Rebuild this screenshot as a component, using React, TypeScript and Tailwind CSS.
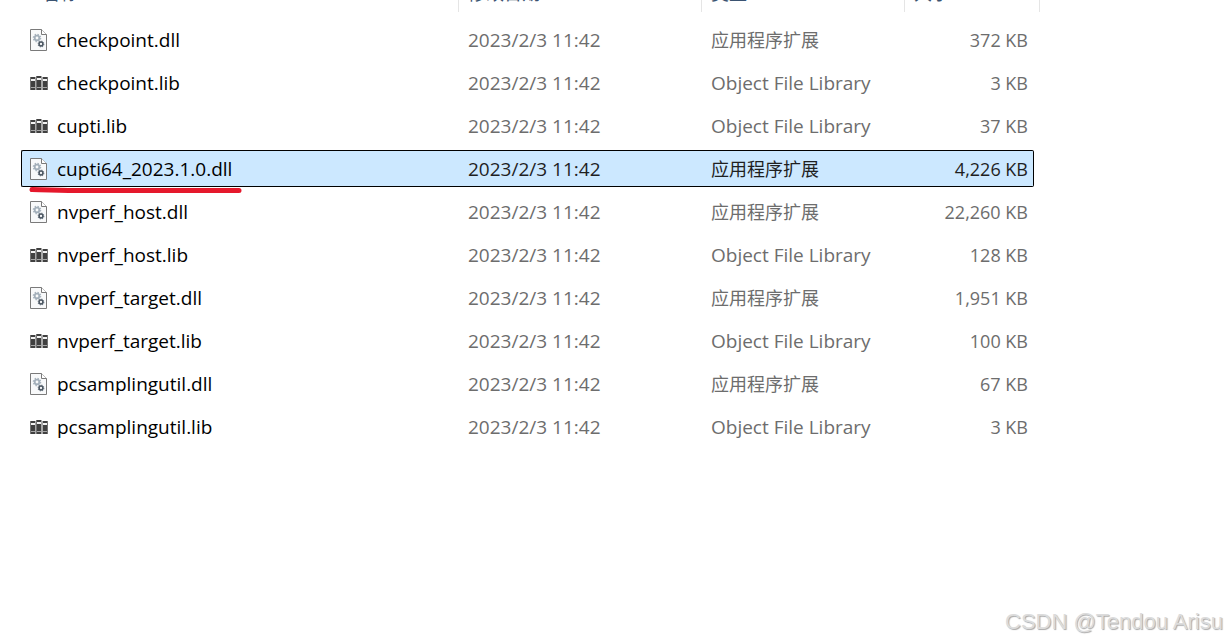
import { clsx } from "clsx";

type FileKind = "dll" | "lib";

interface FileEntry {
  name: string;
  kind: FileKind;
  size: string;
}

const MODIFIED = "2023/2/3 11:42";

const KIND_LABELS: Record<FileKind, string> = {
  dll: "应用程序扩展",
  lib: "Object File Library",
};

const files: FileEntry[] = [
  { name: "checkpoint.dll", kind: "dll", size: "372 KB" },
  { name: "checkpoint.lib", kind: "lib", size: "3 KB" },
  { name: "cupti.lib", kind: "lib", size: "37 KB" },
  { name: "cupti64_2023.1.0.dll", kind: "dll", size: "4,226 KB" },
  { name: "nvperf_host.dll", kind: "dll", size: "22,260 KB" },
  { name: "nvperf_host.lib", kind: "lib", size: "128 KB" },
  { name: "nvperf_target.dll", kind: "dll", size: "1,951 KB" },
  { name: "nvperf_target.lib", kind: "lib", size: "100 KB" },
  { name: "pcsamplingutil.dll", kind: "dll", size: "67 KB" },
  { name: "pcsamplingutil.lib", kind: "lib", size: "3 KB" },
];

const SELECTED = "cupti64_2023.1.0.dll";

function DllIcon() {
  return (
    <svg className="shrink-0" width="18" height="22" viewBox="0 0 18 22" fill="none" aria-hidden="true">
      <path d="M.5.5h11l5 5v16H.5z" fill="#f8f9fa" stroke="#7a7a7a" />
      <path d="M11.5.5v5h5" fill="#fff" stroke="#7a7a7a" />
      <circle cx="7" cy="9" r="3.5" stroke="#a9b4be" strokeWidth="1.6" strokeDasharray="1.4 1.35" />
      <circle cx="7" cy="9" r="2.3" stroke="#a3afba" strokeWidth="1.8" />
      <circle cx="11" cy="15" r="2.8" stroke="#7b8792" strokeWidth="1.2" strokeDasharray="1.2 1" />
      <circle cx="11" cy="15" r="1.9" fill="#f8f9fa" stroke="#4c5762" strokeWidth="1.5" />
    </svg>
  );
}

function LibIcon() {
  return (
    <svg className="shrink-0" width="18" height="16" viewBox="0 0 18 16" aria-hidden="true">
      <path d="M0 2h6v13H0zM6 1h6v14H6zM12 2h6v13h-6z" fill="#a8a8a8" />
      <path d="M.5 2H5v13H.5zM6.5 1H11v14H6.5zM13 2h4.500v13H13z" fill="#404040" />
      <path d="M1 4h4v2H1zM7 3h4v2H7zM13 4h4v2h-4z" fill="#f2f2f2" />
      <path d="M1 12h4v1H1zM7 12h4v1H7zM13 12h4v1h-4z" fill="#a6a6a6" />
    </svg>
  );
}

// hand-drawn marker line under the highlighted file
function MarkerLine() {
  return (
    <svg
      className="pointer-events-none absolute left-[7px] top-[35px] z-10"
      width="214"
      height="8"
      viewBox="0 0 214 8"
      fill="none"
      aria-hidden="true"
    >
      <path
        d="M3 3.5C18 4 28 4.5 48 4.5H210"
        stroke="#e5182c"
        strokeWidth="5"
        strokeLinecap="round"
        strokeLinejoin="round"
      />
    </svg>
  );
}

interface HeaderCellProps {
  label: string;
  colSpan?: number;
  className?: string;
}

function HeaderCell({ label, colSpan, className = "pl-[9px]" }: HeaderCellProps) {
  return (
    <th scope="col" colSpan={colSpan} className="p-0 align-top font-normal">
      <div className={clsx("flex h-3 items-end overflow-hidden border-r border-[#e5e5e5] text-[#3b5371]", className)}>
        <span className="pb-[7px] leading-6">{label}</span>
      </div>
    </th>
  );
}

function FileRow({ file, selected }: { file: FileEntry; selected: boolean }) {
  const cell = clsx(
    "h-[37px] border-y p-0",
    selected ? "border-black bg-[#cce8ff] text-[#1f1f1f]" : "border-transparent text-[#6d6d6d]"
  );

  return (
    <tr aria-selected={selected}>
      <td className={clsx(cell, "relative rounded-l-xs border-l")}>
        <div className="flex items-center gap-[9px] pl-2 text-[19px] text-black">
          {file.kind === "dll" ? <DllIcon /> : <LibIcon />}
          <span>{file.name}</span>
        </div>
        {selected && <MarkerLine />}
      </td>
      <td className={cell}>
        <div className="pl-[9px] text-[19px]">{MODIFIED}</div>
      </td>
      <td className={cell}>
        <div className={clsx("pl-[9px]", file.kind === "lib" && "text-[19px]")}>{KIND_LABELS[file.kind]}</div>
      </td>
      <td className={clsx(cell, "rounded-r-xs border-r")}>
        <div className="pr-[5px] text-right">{file.size}</div>
      </td>
    </tr>
  );
}

export default function App() {
  return (
    <main className="relative min-h-screen overflow-hidden bg-white font-['Open_Sans','Noto_Sans_CJK_SC',sans-serif]">
      <table className="-mt-1.5 ml-[21px] table-fixed border-separate border-spacing-x-0 border-spacing-y-1.5 whitespace-nowrap text-[18px] leading-6">
        <colgroup>
          <col className="w-[438px]" />
          <col className="w-[243px]" />
          <col className="w-[203px]" />
          <col className="w-[129px]" />
          <col className="w-[6px]" />
        </colgroup>
        <thead>
          <tr className="h-[15px]">
            <HeaderCell label="名称" className="pl-[21px]" />
            <HeaderCell label="修改日期" />
            <HeaderCell label="类型" />
            <HeaderCell label="大小" colSpan={2} />
          </tr>
        </thead>
        <tbody>
          {files.map((file) => (
            <FileRow key={file.name} file={file} selected={file.name === SELECTED} />
          ))}
        </tbody>
      </table>

      <p className="absolute bottom-1 right-1 font-['Liberation_Sans',Arial,sans-serif] text-[22px] leading-8 text-[#dcdcdc] [text-shadow:1px_1px_1px_#a8a8a8]">
        CSDN @Tendou Arisu
      </p>
    </main>
  );
}
